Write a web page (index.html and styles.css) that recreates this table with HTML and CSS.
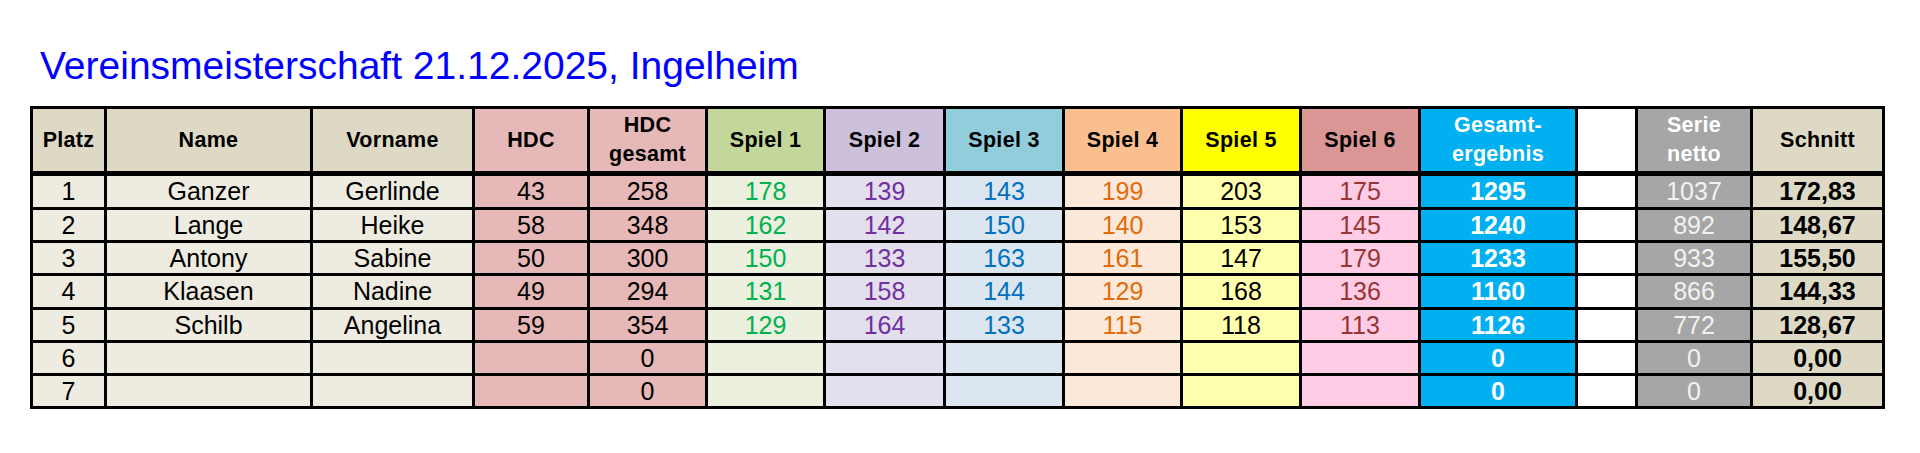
FILE: index.html
```html
<!DOCTYPE html>
<html lang="de">
<head>
<meta charset="utf-8">
<title>Vereinsmeisterschaft</title>
<link rel="stylesheet" href="styles.css">
</head>
<body>
<div class="page">
  <h1 class="title">Vereinsmeisterschaft 21.12.2025, Ingelheim</h1>
  <div class="sheet">
    <div class="c hd tan">Platz</div>
    <div class="c hd tan">Name</div>
    <div class="c hd tan">Vorname</div>
    <div class="c hd hdc">HDC</div>
    <div class="c hd hdc">HDC<br>gesamt</div>
    <div class="c hd s1h">Spiel 1</div>
    <div class="c hd s2h">Spiel 2</div>
    <div class="c hd s3h">Spiel 3</div>
    <div class="c hd s4h">Spiel 4</div>
    <div class="c hd s5h">Spiel 5</div>
    <div class="c hd s6h">Spiel 6</div>
    <div class="c hd tot">Gesamt-<br>ergebnis</div>
    <div class="c hd blank"></div>
    <div class="c hd net">Serie<br>netto</div>
    <div class="c hd tan">Schnitt</div>

    <div class="c lt">1</div><div class="c lt">Ganzer</div><div class="c lt">Gerlinde</div><div class="c hdc">43</div><div class="c hdc">258</div><div class="c s1">178</div><div class="c s2">139</div><div class="c s3">143</div><div class="c s4">199</div><div class="c s5">203</div><div class="c s6">175</div><div class="c tot b">1295</div><div class="c blank"></div><div class="c net">1037</div><div class="c tan b">172,83</div>

    <div class="c lt">2</div><div class="c lt">Lange</div><div class="c lt">Heike</div><div class="c hdc">58</div><div class="c hdc">348</div><div class="c s1">162</div><div class="c s2">142</div><div class="c s3">150</div><div class="c s4">140</div><div class="c s5">153</div><div class="c s6">145</div><div class="c tot b">1240</div><div class="c blank"></div><div class="c net">892</div><div class="c tan b">148,67</div>

    <div class="c lt">3</div><div class="c lt">Antony</div><div class="c lt">Sabine</div><div class="c hdc">50</div><div class="c hdc">300</div><div class="c s1">150</div><div class="c s2">133</div><div class="c s3">163</div><div class="c s4">161</div><div class="c s5">147</div><div class="c s6">179</div><div class="c tot b">1233</div><div class="c blank"></div><div class="c net">933</div><div class="c tan b">155,50</div>

    <div class="c lt">4</div><div class="c lt">Klaasen</div><div class="c lt">Nadine</div><div class="c hdc">49</div><div class="c hdc">294</div><div class="c s1">131</div><div class="c s2">158</div><div class="c s3">144</div><div class="c s4">129</div><div class="c s5">168</div><div class="c s6">136</div><div class="c tot b">1160</div><div class="c blank"></div><div class="c net">866</div><div class="c tan b">144,33</div>

    <div class="c lt">5</div><div class="c lt">Schilb</div><div class="c lt">Angelina</div><div class="c hdc">59</div><div class="c hdc">354</div><div class="c s1">129</div><div class="c s2">164</div><div class="c s3">133</div><div class="c s4">115</div><div class="c s5">118</div><div class="c s6">113</div><div class="c tot b">1126</div><div class="c blank"></div><div class="c net">772</div><div class="c tan b">128,67</div>

    <div class="c lt">6</div><div class="c lt"></div><div class="c lt"></div><div class="c hdc"></div><div class="c hdc">0</div><div class="c s1"></div><div class="c s2"></div><div class="c s3"></div><div class="c s4"></div><div class="c s5"></div><div class="c s6"></div><div class="c tot b">0</div><div class="c blank"></div><div class="c net">0</div><div class="c tan b">0,00</div>

    <div class="c lt">7</div><div class="c lt"></div><div class="c lt"></div><div class="c hdc"></div><div class="c hdc">0</div><div class="c s1"></div><div class="c s2"></div><div class="c s3"></div><div class="c s4"></div><div class="c s5"></div><div class="c s6"></div><div class="c tot b">0</div><div class="c blank"></div><div class="c net">0</div><div class="c tan b">0,00</div>
  </div>
</div>
</body>
</html>
```
FILE: styles.css
```css
html, body {
  margin: 0;
  padding: 0;
  background: #ffffff;
}

.page {
  padding: 44px 0 0 30px;
  font-family: "Liberation Sans", Arial, sans-serif;
}

.title {
  margin: 0 0 18px 0;
  padding-left: 10px;
  font-size: 39px;
  line-height: 44px;
  font-weight: normal;
  color: #0000ff;
}

.sheet {
  display: grid;
  width: max-content;
  grid-template-columns: 71px 203px 159px 112px 115px 115px 117px 116px 115px 116px 116px 154px 57px 112px 129px;
  grid-template-rows: 64px 31px 30px 30px 31px 30px 30px 30px;
  gap: 3px;
  padding: 3px;
  background: #000000;
}

.c {
  display: flex;
  align-items: center;
  justify-content: center;
  text-align: center;
  font-size: 25px;
  color: #000000;
  line-height: 1;
  overflow: hidden;
}

.hd {
  font-size: 21.5px;
  font-weight: bold;
  line-height: 29px;
  letter-spacing: 0.3px;
  border-bottom: 2px solid #000000;
}

.b { font-weight: bold; }

.tan { background: #ddd9c4; }
.lt { background: #eeece1; }
.hdc { background: #e6b8b7; }

.s1h { background: #c4d79b; }
.s2h { background: #ccc0da; }
.s3h { background: #92cddc; }
.s4h { background: #fabf8f; }
.s5h { background: #ffff00; }
.s6h { background: #da9694; }

.s1 { background: #ebf1de; color: #00b050; }
.s2 { background: #e4dfec; color: #7030a0; }
.s3 { background: #dce6f1; color: #0070c0; }
.s4 { background: #fde9d9; color: #e26b0a; }
.s5 { background: #ffffad; color: #000000; }
.s6 { background: #ffcce6; color: #963634; }

.tot { background: #00b0f0; color: #ffffff; }
.blank { background: #ffffff; }
.net { background: #a6a6a6; color: #f2f2f2; }
.hd.net { color: #ffffff; }
```
